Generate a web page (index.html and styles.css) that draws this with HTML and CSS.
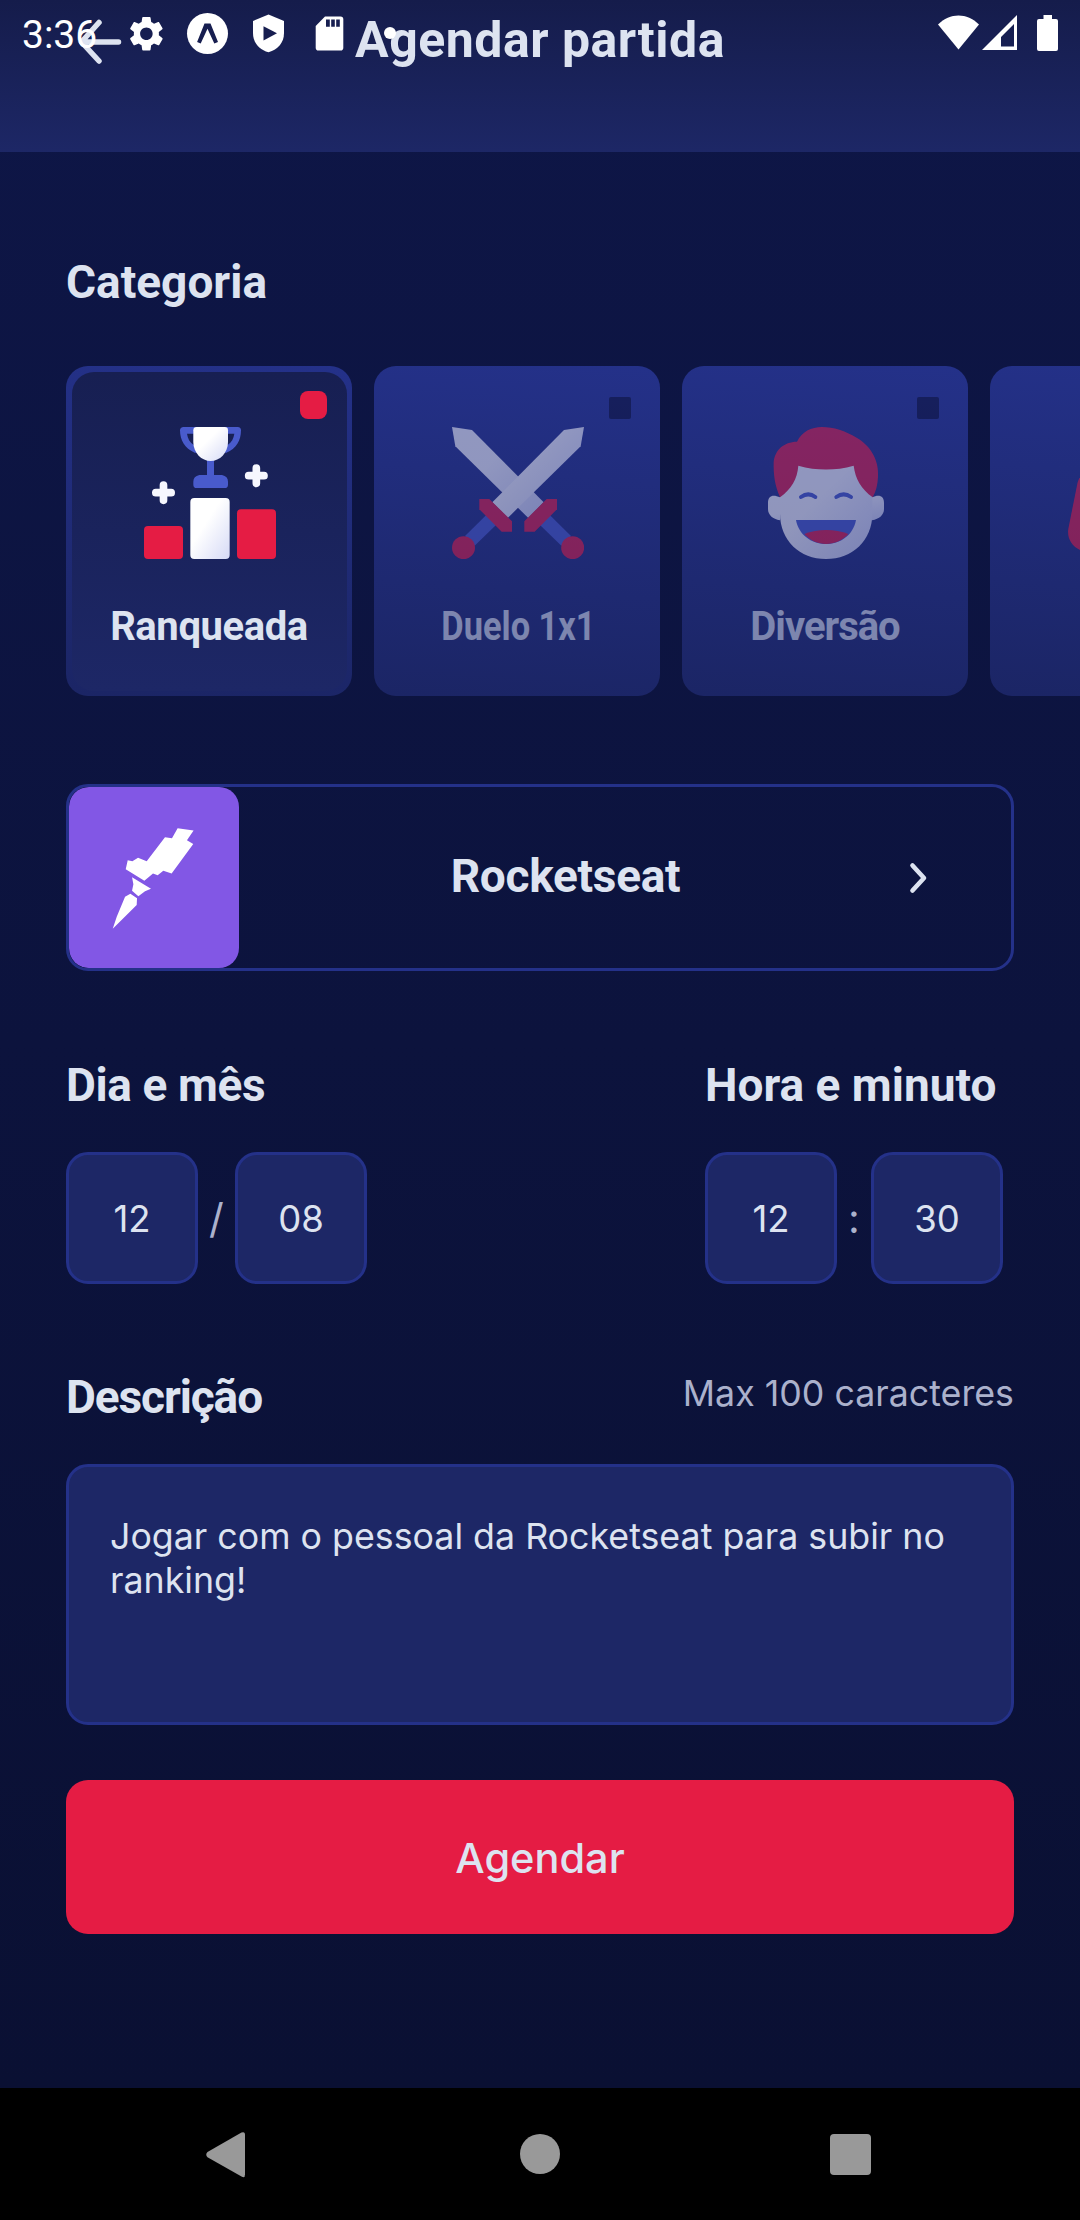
FILE: index.html
```html
<!DOCTYPE html>
<html lang="pt-BR">
<head>
<meta charset="utf-8">
<title>Agendar partida</title>
<link rel="stylesheet" href="styles.css">
</head>
<body>
<div class="screen">
  <header class="header">
    <svg class="back" width="44" height="46" viewBox="0 0 44 46"><path d="M40.500 23H4M21 3.500 3.500 23 21 42" /></svg>
    <h1 class="title">Agendar partida</h1>
  </header>

  <div class="status">
    <span class="clock">3:36</span>
    <svg class="status-icons" width="300" height="60" viewBox="0 0 300 60">
      <g transform="translate(25.500 12.800) scale(1.740)"><path d="M19.140 12.940c.04-.3.06-.61.06-.94s-.02-.64-.07-.94l2.030-1.580c.18-.14.23-.41.12-.61l-1.920-3.320c-.12-.22-.37-.29-.59-.22l-2.390.96c-.5-.38-1.030-.7-1.620-.94l-.36-2.540c-.04-.24-.24-.41-.48-.41h-3.840c-.24 0-.43.17-.47.41l-.36 2.540c-.59.24-1.130.57-1.620.94l-2.390-.96c-.22-.08-.47 0-.59.22L2.740 8.870c-.12.21-.08.47.12.61l2.030 1.580c-.05.3-.09.63-.09.940s.02.64.07.94l-2.030 1.580c-.18.14-.23.41-.12.61l1.920 3.320c.12.22.37.29.59.22l2.390-.96c.5.38 1.030.7 1.620.94l.36 2.540c.05.24.24.41.48.41h3.840c.24 0 .44-.17.47-.41l.36-2.540c.59-.24 1.130-.56 1.620-.94l2.390.96c.22.08.47 0 .59-.22l1.920-3.320c.12-.22.07-.47-.12-.61l-2.010-1.580zM12 15.600c-1.980 0-3.600-1.620-3.600-3.600s1.620-3.600 3.600-3.600 3.600 1.620 3.600 3.600-1.620 3.600-3.600 3.600z"/></g>
      <circle cx="107.500" cy="33.500" r="20.500"/>
      <path class="ink" d="M104.500 23.500h6l7.500 18.500-3.700 1.500-6.800-14.700-6.800 14.700-3.600-1.500z"/>
      <path d="M168.500 14.500 184 21v12c0 9.500-6 16.500-15.500 19.200C159 49.500 153 42.500 153 33V21z"/>
      <path class="ink" d="M163.500 26.200v14.300l13.500-7.200z"/>
      <path d="M225 16.500h15.500a2.800 2.800 0 0 1 2.800 2.800v28.500a2.800 2.800 0 0 1-2.800 2.800h-22a2.800 2.800 0 0 1-2.800-2.800V26z"/>
      <path class="ink" d="M226 19.500h3.800v7.200H226zM231.200 19.500h3.600v7.200h-3.600zM236.200 19.500h3.600v7.200h-3.600z"/>
      <circle cx="290" cy="33" r="6"/>
    </svg>
    <svg class="status-right" width="130" height="60" viewBox="0 0 130 60">
      <path d="M8 24.500c12-12 29-12 41 0L28.500 49.500z"/>
      <path fill-rule="evenodd" d="M52 50 87 15v35zM71 46.500h13V24L71 37z"/>
      <path d="M113.500 15h8.500v4h4a2 2 0 0 1 2 2v28a2 2 0 0 1-2 2h-17a2 2 0 0 1-2-2V21a2 2 0 0 1 2-2h4.500z"/>
    </svg>
  </div>

  <main class="content">
    <h2 class="label categoria">Categoria</h2>

    <div class="categories">
      <div class="card">
        <div class="card-body selected">
          <span class="check"></span>
          <svg class="icon" viewBox="0 0 396 396">
            <defs><linearGradient id="w1" x1="0" y1="0" x2="1" y2="1"><stop offset=".4" stop-color="#fff"/><stop offset="1" stop-color="#d6daf6"/></linearGradient></defs>
            <path fill="#495BCC" fill-rule="evenodd" d="M119 0h162c7 0 10 4 10 10 0 30-14 56-44 67H152c-30-12-44-38-44-67 0-6 4-10 11-10zM129 20c2 14 8 26 20 34V20zM271 20c-2 14-8 26-20 34V20z"/>
            <path fill="#495BCC" d="M189 96h21v48h24q18 4 18 20v9q0 10-10 10h-84q-10 0-10-10v-9q0-16 18-20h23z"/>
            <path fill="url(#w1)" d="M158 0h84q10 0 10 10v35c0 33-25 57-52 57s-52-24-52-57V10q0-10 10-10z"/>
            <g fill="none" stroke="#f6f7fe" stroke-width="23" stroke-linecap="round"><path d="M58.500 174v46M35.500 197h46M337 123v46M314 146h46"/></g>
            <rect x="0" y="297" width="117" height="99" rx="12" fill="#E51C44"/>
            <rect x="139" y="213" width="118" height="183" rx="12" fill="url(#w1)"/>
            <rect x="279" y="247" width="117" height="149" rx="12" fill="#E51C44"/>
          </svg>
          <span class="card-name ranqueada">Ranqueada</span>
        </div>
      </div>
      <div class="card">
        <div class="card-body">
          <span class="check"></span>
          <svg class="icon" viewBox="0 0 396 396">
            <path fill="#495BCC" d="M264 294 294 265 357 327 328 356z"/>
            <path fill="url(#w1)" d="M0 0 60 9 275 226 229 273 10 58z"/>
            <path fill="#E51C44" d="M284 216h31v31l-67 67h-31v-31z"/>
            <circle cx="362" cy="362" r="34.500" fill="#E51C44"/>
            <path fill="#495BCC" d="M132 294 102 265 39 327 68 356z"/>
            <path fill="url(#w1)" d="M396 0 336 9 121 226 167 273 386 58z"/>
            <path fill="#E51C44" d="M112 216H82v31l67 67h31v-31z"/>
            <circle cx="34.500" cy="362" r="34.500" fill="#E51C44"/>
          </svg>
          <span class="card-name duelo">Duelo 1x1</span>
        </div>
      </div>
      <div class="card">
        <div class="card-body">
          <span class="check"></span>
          <svg class="icon" viewBox="0 0 396 396">
            <path fill="url(#w1)" d="M60 211c-22-10-36-4-36 17v18c0 18 14 30 36 34zM336 211c22-10 36-4 36 17v18c0 18-14 30-36 34z"/>
            <path fill="url(#w1)" d="M60 200 100 100h196l41 100v60c0 80-60 136-139 136S60 340 60 260z"/>
            <path fill="#E51C44" d="M60 211c-16-36-20-70-19-105 3-36 30-62 70-62 14-30 43-44 75-44 35 0 70 12 104 32 42 24 68 68 64 118-1 23-6 44-16 61-34-25-52-55-57-95q-83 23-166 0c-3 40-21 70-55 95z"/>
            <path fill="none" stroke="#495BCC" stroke-width="12" stroke-linecap="round" d="M123 210q22-16 43 0M229 210q22-16 44 0"/>
            <path fill="#495BCC" d="M108 279h180c-8 43-44 72-90 72s-82-29-90-72z"/>
            <path fill="#E51C44" d="M133 321c40-16 92-16 132 0-36 40-98 40-132 0z"/>
          </svg>
          <span class="card-name diversao">Diversão</span>
        </div>
      </div>
      <div class="card">
        <div class="card-body">
          <svg class="icon" viewBox="0 0 396 396">
            <path fill="#E51C44" d="M60 130C40 140 31 155 28 170L1 305c-6 35 20 68 57 68h280c37 0 63-33 57-68L368 170c-4-15-12-30-32-40z"/>
          </svg>
        </div>
      </div>
    </div>

    <div class="guild">
      <svg class="guild-logo" viewBox="0 0 510 544">
        <path fill="#fff" d="M326 124 374 131 354 160 373 171 308 260 283 252 266 265 252 260 226 282 170 247 176 220 190 223 207 213 233 223 288 151 309 154zM189 271 246 306 228 313 208 328 189 312 193 292zM184 321 204 334 203 355 131 426 143 390 168 330z"/>
      </svg>
      <span class="label rocketseat">Rocketseat</span>
      <svg class="chevron" width="20" height="34" viewBox="0 0 20 34"><path d="M3.500 4.500 15 17 3.500 29.500"/></svg>
    </div>

    <div class="when">
      <div>
        <h2 class="label dia">Dia e mês</h2>
        <div class="pair"><span class="small-input">12</span><span class="sep">/</span><span class="small-input">08</span></div>
      </div>
      <div class="time">
        <h2 class="label hora">Hora e minuto</h2>
        <div class="pair"><span class="small-input">12</span><span class="sep colon">:</span><span class="small-input">30</span></div>
      </div>
    </div>

    <div class="description-head">
      <h2 class="label descricao">Descrição</h2>
      <span class="limit">Max 100 caracteres</span>
    </div>
    <div class="textarea">Jogar com o pessoal da Rocketseat para subir no ranking!</div>
    <div class="button">Agendar</div>
  </main>

  <nav class="nav">
    <svg width="1080" height="132" viewBox="0 0 1080 132">
      <path d="M207.500 64 241.500 44.600Q245 43 245 47V86.500Q245 90.500 241.500 88.600L207.500 69.300Q205 66.700 207.500 64z"/>
      <circle cx="540" cy="66" r="20"/>
      <rect x="830" y="46" width="41" height="41" rx="4"/>
    </svg>
  </nav>
</div>
</body>
</html>
```
FILE: styles.css
```css
* { box-sizing: border-box; }
body { margin: 0; background: #000; }
h1, h2 { margin: 0; }

.screen {
  position: relative;
  display: flex;
  flex-direction: column;
  width: 1080px;
  height: 2220px;
  overflow: hidden;
  background: linear-gradient(#0e1647, #0a1033 2088px);
  color: #dde3f0;
  font-family: Inter, sans-serif;
}

.header {
  flex: none;
  display: grid;
  grid-template-columns: 78px 1fr 78px;
  height: 152px;
  background: linear-gradient(#151c4b, #1d2766);
}
.back {
  grid-column: 2;
  grid-row: 1;
  margin-top: 19px;
  fill: none;
  stroke: #dde3f0;
  stroke-width: 5.500;
  stroke-linecap: round;
  stroke-linejoin: round;
}
.title {
  grid-column: 1 / 4;
  grid-row: 1;
  margin-top: 10px;
  text-align: center;
  font: 700 50px/60px Roboto, sans-serif;
  letter-spacing: 0.500px;
}

/* system bar drawn over the app header */
.status {
  position: absolute;
  inset: 0 0 auto 0;
  display: flex;
  height: 60px;
  color: #fff;
}
.status svg { fill: #fff; }
.status .ink { fill: #171e50; }
.clock {
  width: 100px;
  padding-left: 22px;
  font: 400 39px/71px Roboto, sans-serif;
}
.status-right { margin-left: auto; margin-right: 20px; }

.content {
  flex: 1;
  display: flex;
  flex-direction: column;
  padding: 100px 66px 0;
}
.label { font: 700 46px/60px Roboto, sans-serif; }
.rocketseat { letter-spacing: -0.300px; }
.dia { letter-spacing: -0.400px; }
.descricao { letter-spacing: -1.100px; }

.categories {
  display: flex;
  gap: 22px;
  margin: 54px -66px 88px 0;
  overflow: hidden;
}
.card {
  flex: none;
  width: 286px;
  height: 330px;
  padding: 5.500px;
  border-radius: 22px;
  background: linear-gradient(184deg, #243189, #1b2565);
}
.card-body {
  position: relative;
  display: flex;
  flex-direction: column;
  align-items: center;
  height: 319px;
  padding-top: 55.500px;
  border-radius: 22px;
  opacity: 0.500;
}
.card-body.selected {
  background: linear-gradient(#171f52, #1d2766);
  opacity: 1;
}
.icon { width: 132px; height: 132px; margin-left: 1px; }
.check {
  position: absolute;
  top: 25px;
  right: 24px;
  width: 22px;
  height: 22px;
  border-radius: 2px;
  background: #0a0f34;
}
.selected .check {
  top: 19.500px;
  right: 20px;
  width: 27px;
  height: 28px;
  border-radius: 8px;
  background: #e51c44;
}
.card-name {
  margin-top: 43px;
  font: 700 40px/50px Roboto, sans-serif;
  white-space: nowrap;
}
.ranqueada { letter-spacing: -0.400px; }
.duelo { padding-left: 3px; transform: scaleX(0.860); }
.diversao { letter-spacing: -1px; }

.guild {
  display: flex;
  align-items: center;
  height: 187px;
  border: 3px solid #243189;
  border-radius: 22px;
  overflow: hidden;
}
.guild-logo {
  width: 170px;
  height: 181px;
  border-radius: 20px;
  background: #8257e5;
}
.rocketseat { flex: 1; padding: 0 17px 3px 0; text-align: center; }
.chevron {
  margin-right: 82px;
  fill: none;
  stroke: #dde3f0;
  stroke-width: 4.600;
  stroke-linecap: round;
  stroke-linejoin: round;
}

.when {
  display: flex;
  justify-content: space-between;
  margin-top: 84px;
}
.time { width: 309px; }
.pair { display: flex; height: 132px; margin-top: 37px; }
.small-input {
  display: flex;
  align-items: center;
  justify-content: center;
  width: 132px;
  height: 132px;
  padding-top: 1px;
  border: 3px solid #243189;
  border-radius: 22px;
  background: #1d2766;
  font-size: 36.500px;
}
.sep {
  width: 37px;
  text-align: center;
  color: #abb1cc;
  font: 400 41px/132px Inter, sans-serif;
}
.sep.colon { width: 34px; }

.description-head {
  display: flex;
  justify-content: space-between;
  margin-top: 83px;
}
.limit {
  margin-top: 4px;
  color: #abb1cc;
  font-size: 35.750px;
  line-height: 44px;
}
.textarea {
  height: 261px;
  margin-top: 37px;
  padding: 47px 41px;
  border: 3px solid #243189;
  border-radius: 22px;
  background: #1d2766;
  font-size: 35.750px;
  line-height: 44px;
}
.button {
  display: flex;
  align-items: center;
  justify-content: center;
  height: 154px;
  margin-top: 55px;
  padding-top: 1px;
  border-radius: 22px;
  background: #e51c44;
  font-size: 41.500px;
  font-weight: 500;
}

.nav {
  flex: none;
  height: 132px;
  background: #000;
}
.nav svg { display: block; fill: #999; }
```
